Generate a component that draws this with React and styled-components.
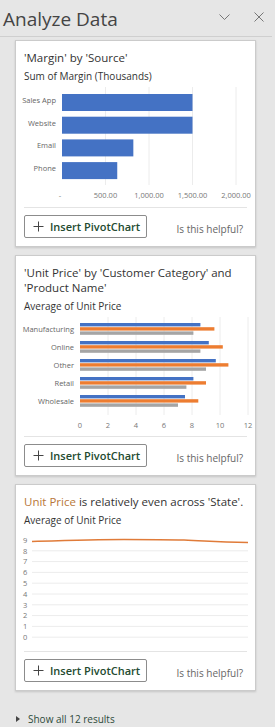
import React from 'react'
import styled, { createGlobalStyle } from 'styled-components'

const GlobalStyle = createGlobalStyle`
  body {
    margin: 0;
    background: #e6e6e6;
    font-family: "Open Sans", "Noto Sans", sans-serif;
    color: #333;
  }
`

const marginBars = [
  { label: 'Sales App', value: 1500 },
  { label: 'Website', value: 1500 },
  { label: 'Email', value: 820 },
  { label: 'Phone', value: 635 },
]

const priceGroups = [
  { label: 'Manufacturing', values: [8.6, 9.6, 8.1] },
  { label: 'Online', values: [9.2, 10.2, 8.6] },
  { label: 'Other', values: [9.7, 10.6, 9.0] },
  { label: 'Retail', values: [8.1, 9.0, 7.6] },
  { label: 'Wholesale', values: [7.5, 8.45, 7.0] },
]

const seriesColors = ['#4472c4', '#ed7d31', '#a5a5a5']

function MarginChart() {
  const x0 = 38
  const scale = 43.5 / 500
  const ticks = ['-', '500.00', '1,000.00', '1,500.00', '2,000.00']
  return (
    <ChartSvg width="224" height="123" viewBox="0 0 224 123">
      {[1, 2, 3, 4].map((i) => (
        <line key={i} x1={x0 + i * 500 * scale} x2={x0 + i * 500 * scale} y1="3" y2="101" stroke="#ececec" strokeWidth="1" />
      ))}
      {marginBars.map((b, i) => (
        <g key={b.label}>
          <text x="32" y={10 + i * 22.7 + 9} textAnchor="end" fontSize="7.5" fill="#666">{b.label}</text>
          <rect x={x0} y={10 + i * 22.7} width={b.value * scale} height="17" fill="#4472c4" />
        </g>
      ))}
      {ticks.map((t, i) => (
        <text key={t} x={x0 + i * 500 * scale - (i === 0 ? 2 : 0)} y="114" textAnchor="middle" fontSize="7.5" fill="#777">{t}</text>
      ))}
    </ChartSvg>
  )
}

function PriceChart() {
  const x0 = 56
  const scale = 14
  return (
    <ChartSvg width="224" height="122" viewBox="0 0 224 122">
      {[1, 2, 3, 4, 5, 6].map((i) => (
        <line key={i} x1={x0 + i * 2 * scale} x2={x0 + i * 2 * scale} y1="3" y2="101" stroke="#ececec" strokeWidth="1" />
      ))}
      {priceGroups.map((g, i) => {
        const top = 9 + i * 18
        return (
          <g key={g.label}>
            <text x="50" y={top + 8.5} textAnchor="end" fontSize="7.5" fill="#666">{g.label}</text>
            {g.values.map((v, j) => (
              <rect key={j} x={x0} y={top + j * 4.2} width={v * scale} height="3.4" fill={seriesColors[j]} />
            ))}
          </g>
        )
      })}
      {[0, 2, 4, 6, 8, 10, 12].map((t) => (
        <text key={t} x={x0 + t * scale} y="114" textAnchor="middle" fontSize="7.5" fill="#777">{t}</text>
      ))}
    </ChartSvg>
  )
}

function StateChart() {
  const y9 = 12
  const step = 10.8
  return (
    <ChartSvg width="224" height="123" viewBox="0 0 224 123">
      {[9, 8, 7, 6, 5, 4, 3, 2, 1, 0].map((v) => {
        const y = y9 + (9 - v) * step
        return (
          <g key={v}>
            <text x="-1" y={y + 2.7} fontSize="7.5" fill="#777">{v}</text>
            {v !== 9 && <line x1="8" x2="224" y1={y} y2={y} stroke="#ececec" strokeWidth="1" />}
          </g>
        )
      })}
      <path
        d="M8 13.5 C 40 12.5, 70 11.5, 100 11.5 S 140 11.5, 160 12 S 190 14.5, 224 14.5"
        fill="none"
        stroke="#e07b39"
        strokeWidth="1.4"
      />
    </ChartSvg>
  )
}

function PlusIcon() {
  return (
    <svg width="11" height="11" viewBox="0 0 11 11">
      <path d="M5.5 0.5 V10.5 M0.5 5.5 H10.5" stroke="#444" strokeWidth="1" fill="none" />
    </svg>
  )
}

function CardFooter() {
  return (
    <Footer>
      <InsertButton>
        <PlusIcon />
        Insert PivotChart
      </InsertButton>
      <Helpful>Is this helpful?</Helpful>
    </Footer>
  )
}

export default function App() {
  return (
    <Pane>
      <GlobalStyle />
      <Header>
        <Title>Analyze Data</Title>
        <HeaderIcons>
          <svg width="11" height="7" viewBox="0 0 11 7">
            <path d="M0.5 0.5 L5.5 5.5 L10.5 0.5" stroke="#777" strokeWidth="1" fill="none" />
          </svg>
          <svg width="10" height="10" viewBox="0 0 10 10">
            <path d="M0.5 0.5 L9.5 9.5 M9.5 0.5 L0.5 9.5" stroke="#777" strokeWidth="1" fill="none" />
          </svg>
        </HeaderIcons>
      </Header>

      <Cards>
        <Card>
          <CardTitle>'Margin' by 'Source'</CardTitle>
          <CardSubtitle>Sum of Margin (Thousands)</CardSubtitle>
          <MarginChart />
          <CardFooter />
        </Card>

        <Card>
          <CardTitle>'Unit Price' by 'Customer Category' and 'Product Name'</CardTitle>
          <CardSubtitle>Average of Unit Price</CardSubtitle>
          <PriceChart />
          <CardFooter />
        </Card>

        <Card>
          <CardTitle><Accent>Unit Price</Accent> is relatively even across 'State'.</CardTitle>
          <CardSubtitle>Average of Unit Price</CardSubtitle>
          <StateChart />
          <CardFooter />
        </Card>
      </Cards>

      <ShowAll>
        <Caret />
        Show all 12 results
      </ShowAll>
    </Pane>
  )
}

const Pane = styled.div`
  width: 275px;
  height: 727px;
  overflow: hidden;
`
const Header = styled.div`
  height: 36px;
  margin: 0 3px 0 0;
  border-bottom: 1px solid #cfcfcf;
  display: flex;
  align-items: center;
  justify-content: space-between;
`
const Title = styled.div`
  font-size: 19px;
  color: #444;
  padding-left: 3px;
  margin-top: 2px;
`
const HeaderIcons = styled.div`
  display: flex;
  align-items: center;
  gap: 24px;
  padding-right: 8px;
  margin-top: -2px;
`
const Cards = styled.div`
  display: flex;
  flex-direction: column;
  gap: 8px;
  padding: 3px 0 0 15px;
  width: 241px;
`
const Card = styled.div`
  background: #fff;
  border: 1px solid #cbcbcb;
  box-shadow: 0 1px 2px rgba(0, 0, 0, 0.15);
  padding: 9px 8px 0 8px;
`
const CardTitle = styled.div`
  font-size: 11.5px;
  line-height: 15px;
  color: #333;
`
const Accent = styled.span`
  color: #b8773a;
`
const CardSubtitle = styled.div`
  font-size: 10px;
  line-height: 15px;
  margin-top: 4px;
  color: #333;
`
const ChartSvg = styled.svg`
  display: block;
  overflow: visible;
  font-family: "Open Sans", "Noto Sans", sans-serif;
`
const Footer = styled.div`
  border-top: 1px solid #e4e4e4;
  padding: 7px 0 8px;
  display: flex;
  align-items: center;
  justify-content: space-between;
`
const InsertButton = styled.div`
  box-sizing: border-box;
  width: 123px;
  height: 23px;
  border: 1px solid #8c8c8c;
  border-radius: 2px;
  display: flex;
  align-items: center;
  gap: 6px;
  padding-left: 8px;
  font-size: 11px;
  font-weight: 600;
  color: #234a2f;
`
const Helpful = styled.div`
  font-size: 10px;
  color: #666;
  margin: 5px 4px 0 0;
`
const ShowAll = styled.div`
  display: flex;
  align-items: center;
  gap: 8px;
  padding: 21px 0 0 16px;
  font-size: 10px;
  color: #2e4a3a;
`
const Caret = styled.span`
  width: 0;
  height: 0;
  border-top: 3px solid transparent;
  border-bottom: 3px solid transparent;
  border-left: 4px solid #444;
`
